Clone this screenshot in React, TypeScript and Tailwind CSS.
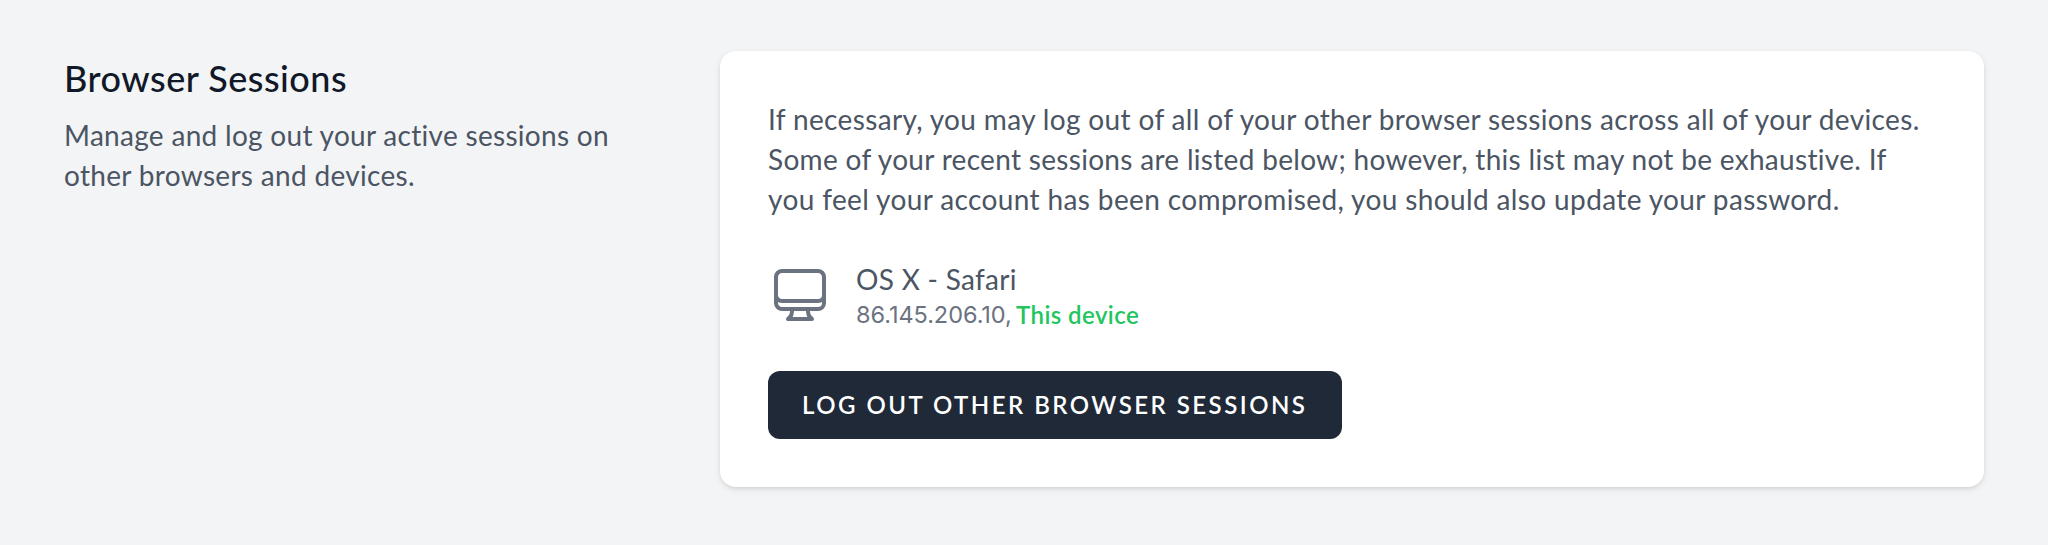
function ComputerDesktopIcon() {
  return (
    <svg className="size-16 text-[#6b7280]" viewBox="0 0 24 24" fill="none" stroke="currentColor" strokeWidth="1.5" strokeLinecap="round" strokeLinejoin="round" aria-hidden="true">
      <path d="M9 17.25v1.007a3 3 0 01-.879 2.122L7.5 21h9l-.621-.621A3 3 0 0115 18.257V17.25m6-12V15a2.25 2.25 0 01-2.25 2.25H5.25A2.25 2.25 0 013 15V5.25m18 0A2.25 2.25 0 0018.75 3H5.25A2.25 2.25 0 003 5.25m18 0V12a2.25 2.25 0 01-2.25 2.25H5.25A2.25 2.25 0 013 12V5.25" />
    </svg>
  );
}

export default function App() {
  return (
    <main className="flex h-[545px] items-start bg-[#f3f4f6] px-16 pt-[51px] font-['Lato','Liberation_Sans',sans-serif] text-[28px] leading-10 text-[#4b5563]">
      <section className="w-[656px] shrink-0 whitespace-nowrap">
        <h3 className="text-[36px] leading-[54px] font-medium tracking-[0.5px] text-[#111827]">Browser Sessions</h3>
        <p className="mt-2.5">
          <span className="block tracking-[0.3px]">Manage and log out your active sessions on</span>
          <span className="block tracking-[0.32px]">other browsers and devices.</span>
        </p>
      </section>

      <section className="h-[436px] flex-1 rounded-2xl bg-white p-12 whitespace-nowrap shadow-[0_2px_6px_0_rgb(0_0_0/0.1),0_2px_4px_-2px_rgb(0_0_0/0.1)]">
        <p>
          <span className="block tracking-[0.355px]">If necessary, you may log out of all of your other browser sessions across all of your devices.</span>
          <span className="block tracking-[0.31px]">Some of your recent sessions are listed below; however, this list may not be exhaustive. If</span>
          <span className="block tracking-[0.375px]">you feel your account has been compromised, you should also update your password.</span>
        </p>

        <div className="mt-10 flex items-center gap-6">
          <ComputerDesktopIcon />
          <div>
            <div className="tracking-[0.3px]">OS X - Safari</div>
            <div className="flex text-[24px] leading-8">
              <span className="w-40 font-['Inter','Liberation_Sans',sans-serif] text-[23.5px] tracking-[-0.05px] text-[#6b7280]">86.145.206.10,</span>
              <span className="font-semibold tracking-[0.42px] text-[#22c55e]">This device</span>
            </div>
          </div>
        </div>

        <button className="mt-10 flex h-[68px] w-[574px] items-center rounded-xl bg-[#1f2937] pl-[34px] text-[24px] leading-8 font-semibold tracking-[2.48px] text-white uppercase">
          Log Out Other Browser Sessions
        </button>
      </section>
    </main>
  );
}
